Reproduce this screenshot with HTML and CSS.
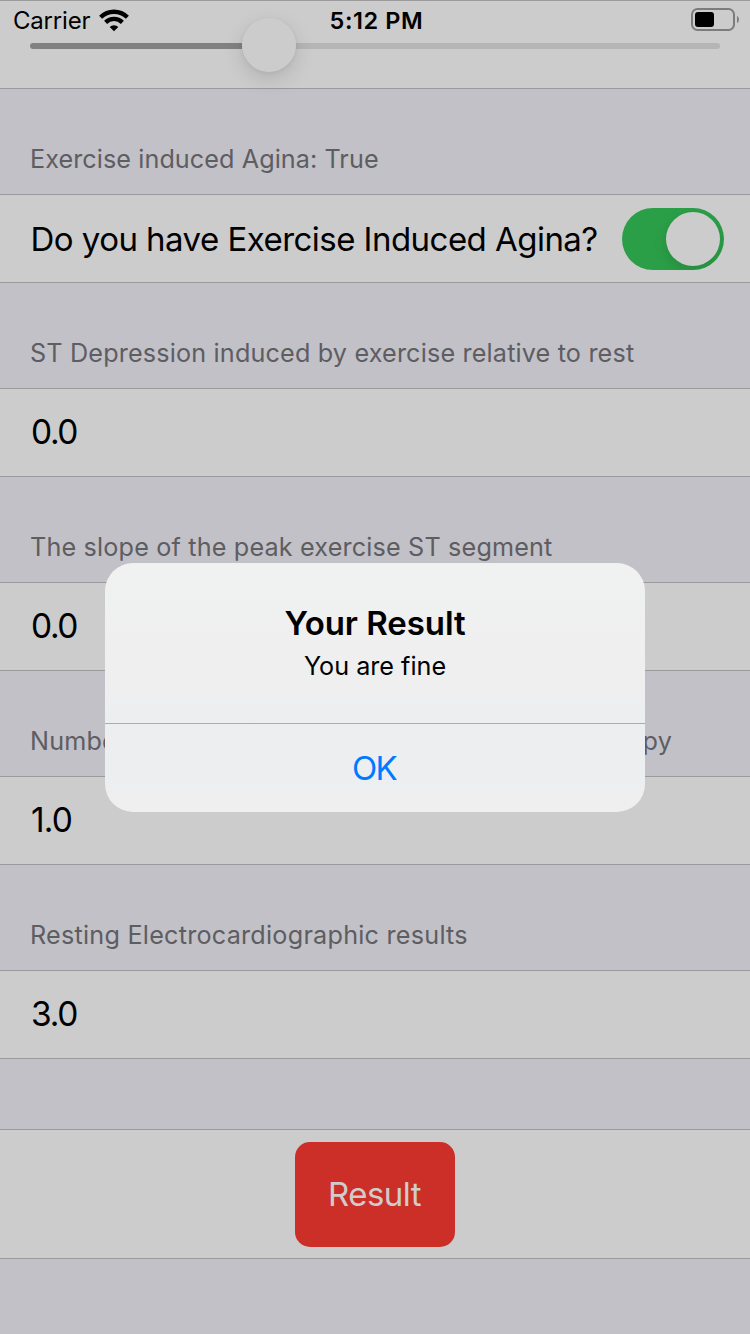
FILE: index.html
```html
<!DOCTYPE html>
<html lang="en">
<head>
<meta charset="utf-8">
<title>Your Result</title>
<link rel="stylesheet" href="styles.css">
</head>
<body>
<div class="screen">
  <main class="form">
    <section class="cell cell-slider">
      <div class="slider">
        <div class="slider-fill"></div>
        <div class="slider-knob"></div>
        <div class="slider-rest"></div>
      </div>
    </section>

    <h2 class="header h-angina">Exercise induced Agina: True</h2>
    <section class="cell">
      <span class="label">Do you have Exercise Induced Agina?</span>
      <div class="toggle"><div class="toggle-knob"></div></div>
    </section>

    <h2 class="header">ST Depression induced by exercise relative to rest</h2>
    <section class="cell value">0.0</section>

    <h2 class="header">The slope of the peak exercise ST segment</h2>
    <section class="cell value">0.0</section>

    <h2 class="header h-vessels">Number of major vessels (0-3) colored by flourosopy</h2>
    <section class="cell value value-one">1.0</section>

    <h2 class="header h-resting">Resting Electrocardiographic results</h2>
    <section class="cell value value-three">3.0</section>

    <section class="cell cell-action">
      <button class="result" type="button">Result</button>
    </section>
  </main>

  <header class="status">
    <div class="carrier">
      <span>Carrier</span>
      <svg class="wifi" width="30" height="23" viewBox="0 0 30 23">
        <g fill="none" stroke="#000" stroke-width="4.3">
          <path d="M1.6 8.2A19.2 19.2 0 0 1 28.4 8.2"/>
          <path d="M6.6 13.4A12 12 0 0 1 23.4 13.4"/>
        </g>
        <path d="M15 22.2L10.7 17.9A6.1 6.1 0 0 1 19.3 17.9Z"/>
      </svg>
    </div>
    <span class="time">5:12 PM</span>
    <svg class="battery" width="49" height="24" viewBox="0 0 49 24">
      <rect x="1" y="1" width="42" height="21" rx="5.5" fill="none" stroke="#7c7c7c" stroke-width="2"/>
      <rect x="4" y="4" width="19" height="15" rx="3"/>
      <path d="M46 8C48.6 9 48.6 14 46 15Z" fill="#7c7c7c"/>
    </svg>
  </header>

  <div class="alert" role="alertdialog">
    <div class="alert-body">
      <div class="alert-title">Your Result</div>
      <div class="alert-message">You are fine</div>
    </div>
    <div class="alert-ok">OK</div>
  </div>
</div>
</body>
</html>
```
FILE: styles.css
```css
* { box-sizing: border-box; }

body {
  margin: 0;
  background: #c2c1c7;
  color: #000;
  font-family: Inter, "Liberation Sans", sans-serif;
}

.screen {
  position: relative;
  width: 750px;
  height: 1334px;
  overflow: hidden;
}

.cell {
  display: flex;
  align-items: center;
  justify-content: space-between;
  height: 89px;
  padding: 0 26px 0 30px;
  background: #ccc;
  border: solid #9b9b9e;
  border-width: 1px 0;
}

.cell-slider { padding: 1px 30px 0; }

.slider {
  display: flex;
  align-items: center;
  width: 100%;
}

.slider-fill {
  width: 212px;
  height: 6px;
  margin-top: 2px;
  border-radius: 3px 0 0 3px;
  background: #81817f;
}

.slider-knob {
  z-index: 1;
  width: 54px;
  height: 54px;
  border-radius: 50%;
  background: #ccc;
  box-shadow: 0 1px 4px rgba(0, 0, 0, .06), 0 7px 20px rgba(0, 0, 0, .13);
}

.slider-rest {
  flex: 1;
  height: 6px;
  margin-top: 2px;
  border-radius: 0 3px 3px 0;
  background: #b5b5b7;
}

.header {
  height: 105px;
  margin: 0;
  padding: 55px 0 0 30px;
  color: #5d5d62;
  font-size: 25.2px;
  font-weight: 400;
  line-height: 30px;
  letter-spacing: .163px;
  white-space: nowrap;
}

.h-angina { letter-spacing: .07px; }
.h-vessels { letter-spacing: .185px; }
.h-resting { letter-spacing: .235px; }

.label {
  padding-left: .5px;
  font-size: 33px;
  letter-spacing: -.535px;
  white-space: nowrap;
}

.toggle {
  display: flex;
  justify-content: flex-end;
  width: 102px;
  height: 62px;
  padding: 4px;
  border-radius: 31px;
  background: #2b9f47;
  overflow: hidden;
}

.toggle-knob {
  width: 54px;
  height: 54px;
  border-radius: 50%;
  background: #ccc;
  box-shadow: 0 5px 14px rgba(0, 0, 0, .13);
}

.value {
  padding-left: 31px;
  padding-bottom: 2px;
  font-size: 33.5px;
  letter-spacing: -1.4px;
}

.value-one { letter-spacing: -.9px; }
.value-three { letter-spacing: -1.3px; }

.cell-action {
  justify-content: center;
  height: 130px;
  margin-top: 70px;
  padding: 0;
}

.result {
  width: 160px;
  height: 105px;
  padding: 0;
  border: 0;
  border-radius: 15px;
  background: #cc2f27;
  color: #d0cccb;
  font: 400 33px Inter, sans-serif;
  letter-spacing: -.5px;
  text-indent: -1px;
}

.status {
  position: absolute;
  inset: 0 0 auto;
  z-index: 2;
  display: grid;
  grid-template-columns: 1fr auto 1fr;
  align-items: center;
  height: 40px;
  padding: 0 10px 0 13px;
  font-size: 24px;
}

.carrier {
  display: flex;
  align-items: center;
  gap: 9px;
  letter-spacing: -.2px;
}

.time {
  font-size: 23.5px;
  font-weight: 600;
  letter-spacing: .6px;
}

.battery { justify-self: end; }

.alert {
  position: absolute;
  top: 563px;
  left: 105px;
  z-index: 3;
  width: 540px;
  height: 249px;
  border-radius: 28px;
  background: linear-gradient(#f0f1f1 0%, #efefef 40%, #edeef0 65%, #edeef0 85%, #efefef 100%);
  text-align: center;
}

.alert-body {
  height: 161px;
  padding-top: 40px;
  border-bottom: 1px solid #acacae;
}

.alert-title {
  font-size: 33px;
  font-weight: 600;
  line-height: 40px;
  letter-spacing: -.05px;
}

.alert-message {
  padding-top: 7px;
  font-size: 25.2px;
  line-height: 32px;
  letter-spacing: 0;
}

.alert-ok {
  color: #007aff;
  font-size: 33px;
  line-height: 88px;
  letter-spacing: -1.6px;
  text-indent: -2px;
}
```
